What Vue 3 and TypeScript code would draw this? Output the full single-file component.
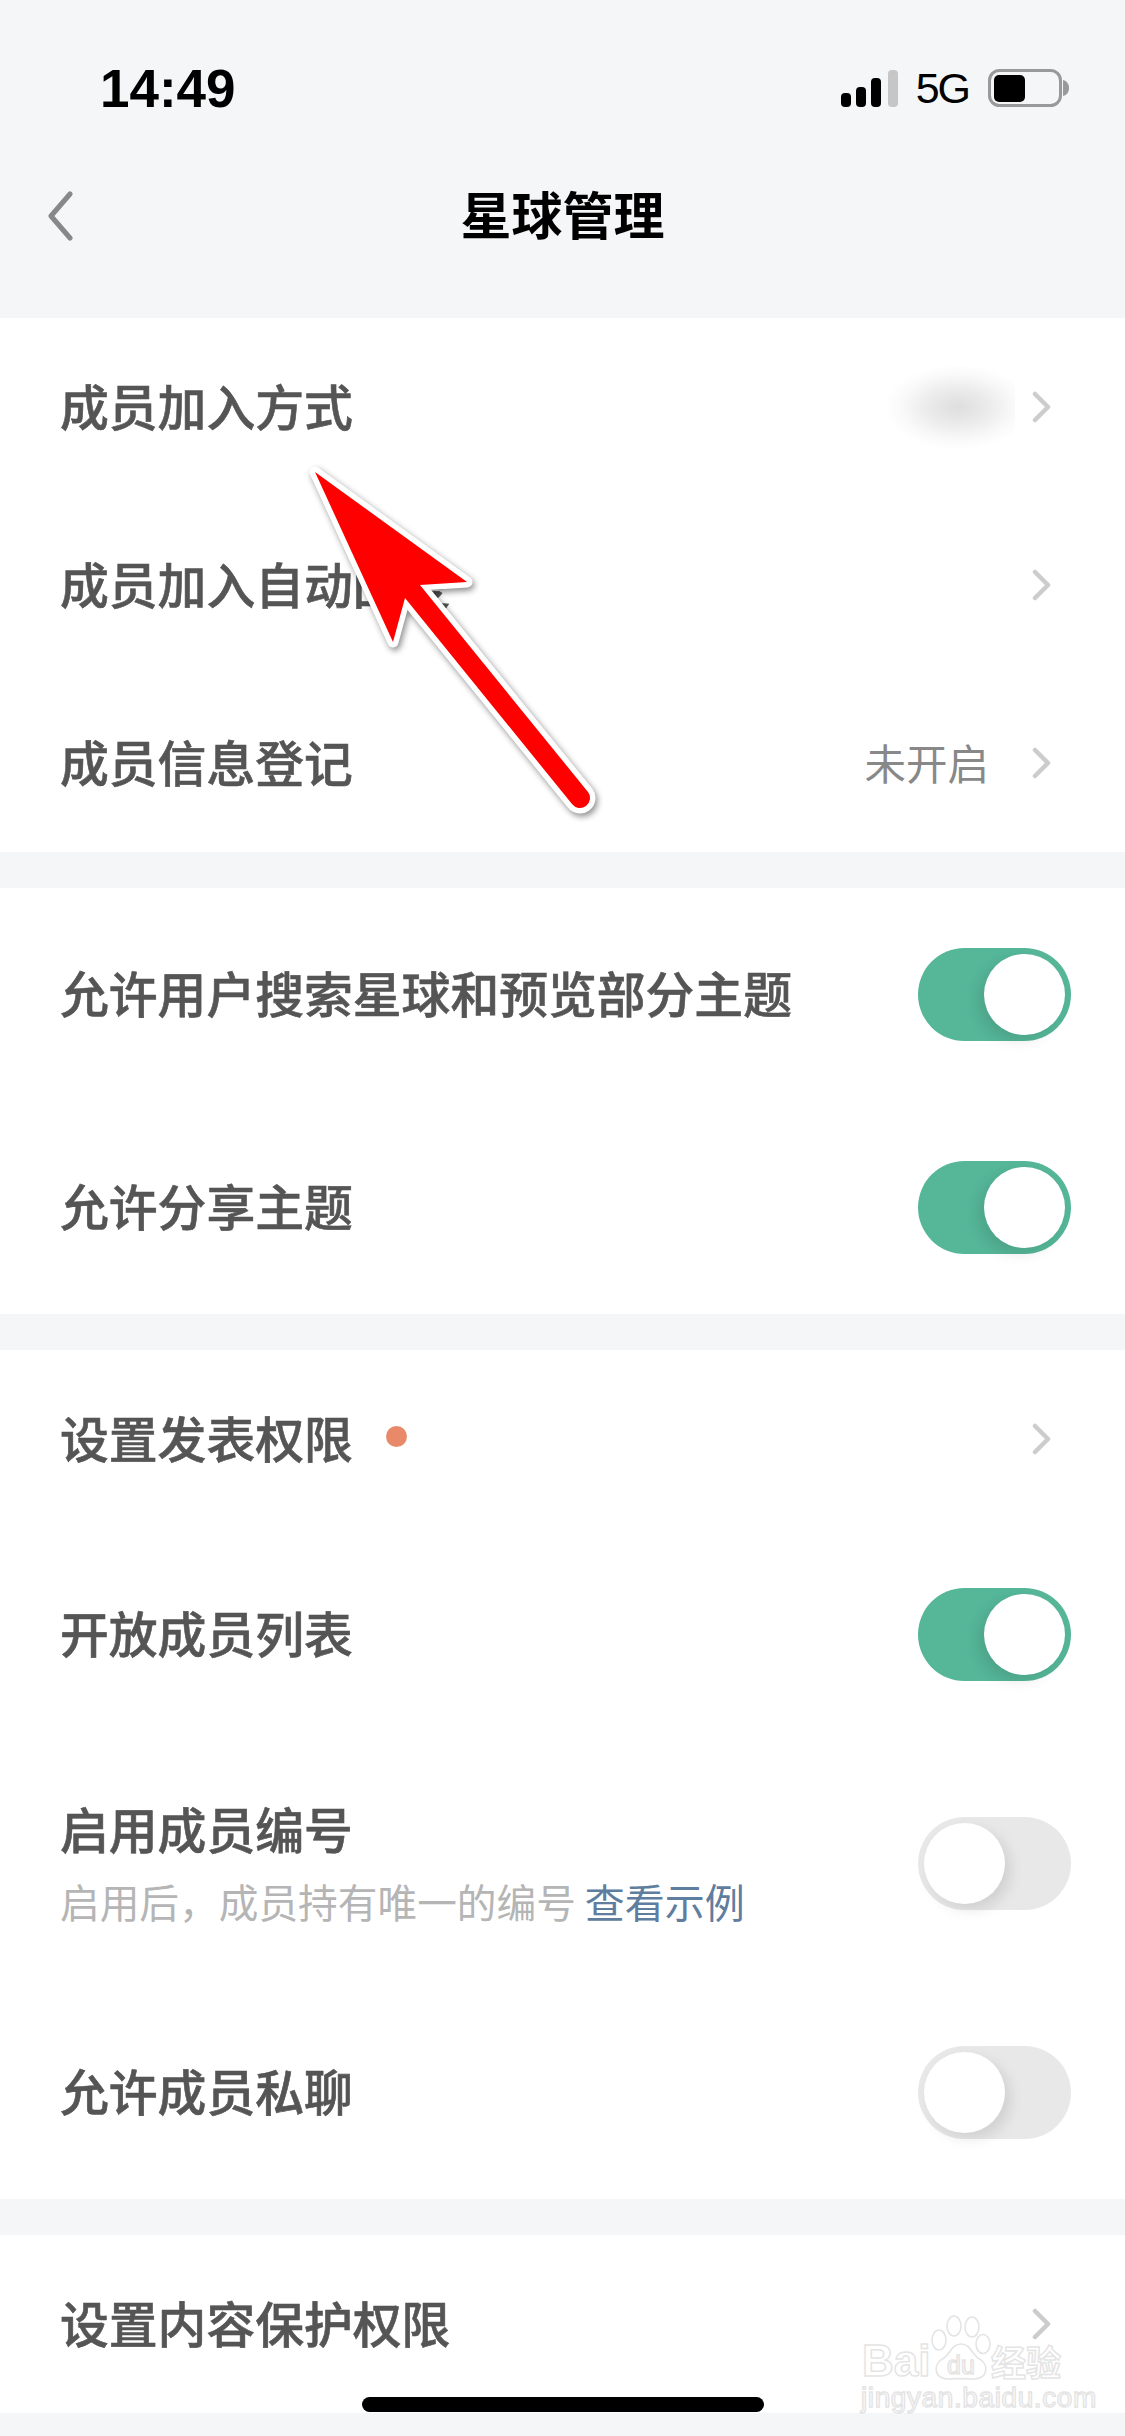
<template>
  <div class="page">
    <header class="header">
      <div class="status">
        <span class="time">14:49</span>
        <div class="status-right">
          <svg class="signal" width="59" height="37" viewBox="0 0 59 37">
            <rect x="2" y="23" width="10" height="14" rx="4" fill="#000" />
            <rect x="17" y="17" width="10" height="20" rx="4" fill="#000" />
            <rect x="32" y="8" width="10" height="29" rx="4" fill="#000" />
            <rect x="49" y="0" width="10" height="37" rx="4" fill="#c6c6c6" />
          </svg>
          <span class="net">5G</span>
          <svg class="battery" width="81" height="38" viewBox="0 0 81 38">
            <rect x="1.5" y="1.5" width="71" height="35" rx="10" fill="none" stroke="#999" stroke-width="3" />
            <rect x="6" y="6" width="31" height="27" rx="5" fill="#000" />
            <path d="M75 11 C79 12 81 15 81 19 C81 23 79 26 75 27 Z" fill="#999" />
          </svg>
        </div>
      </div>
      <div class="nav">
        <svg class="back" width="28" height="50" viewBox="0 0 28 50">
          <path d="M24 3 L5 25 L24 47" fill="none" stroke="#888" stroke-width="5" stroke-linecap="round" stroke-linejoin="round" />
        </svg>
        <h1 class="title">星球管理</h1>
      </div>
    </header>

    <section v-for="(group, i) in groups" :key="i" class="group">
      <div v-for="row in group" :key="row.label" class="row" :class="row.size">
        <div class="label-wrap">
          <div class="label">
            {{ row.label }}
            <span v-if="row.dot" class="dot"></span>
          </div>
          <div v-if="row.hint" class="hint">
            {{ row.hint }} <span class="link">{{ row.link }}</span>
          </div>
        </div>
        <span v-if="row.blurred" class="blurred"></span>
        <span v-if="row.value" class="value">{{ row.value }}</span>
        <svg v-if="row.kind === 'link'" class="chevron" width="20" height="32" viewBox="0 0 20 32">
          <path d="M3 3 L16 16 L3 29" fill="none" stroke="#ccc" stroke-width="4.5" stroke-linecap="round" stroke-linejoin="round" />
        </svg>
        <span v-if="row.kind === 'on' || row.kind === 'off'" class="toggle" :class="row.kind">
          <span class="knob"></span>
        </span>
      </div>
    </section>

    <svg class="arrow" width="1125" height="900" viewBox="0 0 1125 900">
      <path
        d="M315 472 L467 582 L420 585 L588 792 A10 10 0 0 1 572 804 L405 598 L393 642 Z"
        fill="#ff0000"
        stroke="#fff"
        stroke-width="11"
        stroke-linejoin="round"
        paint-order="stroke"
      />
    </svg>

    <div class="watermark">
      <svg class="paw" width="210" height="80" viewBox="0 0 210 80">
        <g fill="#fff" stroke="#e4e4e4" stroke-width="1.6">
          <ellipse cx="79" cy="28" rx="7" ry="10" />
          <ellipse cx="94" cy="14" rx="7" ry="10" />
          <ellipse cx="112" cy="15" rx="7" ry="10" />
          <ellipse cx="123" cy="32" rx="7" ry="9.5" />
          <path d="M101 32 C110 32 112 42 118 46 C130 52 128 67 114 67 C106 67 96 66 88 67 C74 67 72 52 84 46 C90 42 92 32 101 32 Z" />
        </g>
      </svg>
      <span class="wm-bai">Bai</span>
      <span class="wm-du">du</span>
      <span class="wm-jy">经验</span>
      <span class="wm-url">jingyan.baidu.com</span>
    </div>

    <div class="home-bar"></div>
  </div>
</template>

<script setup lang="ts">
interface Row {
  label: string
  size: string
  kind: 'link' | 'on' | 'off'
  value?: string
  blurred?: boolean
  dot?: boolean
  hint?: string
  link?: string
}

const groups: Row[][] = [
  [
    { label: '成员加入方式', size: 'short', kind: 'link', blurred: true },
    { label: '成员加入自动回复', size: 'short', kind: 'link' },
    { label: '成员信息登记', size: 'short', kind: 'link', value: '未开启' },
  ],
  [
    { label: '允许用户搜索星球和预览部分主题', size: 'mid', kind: 'on' },
    { label: '允许分享主题', size: 'mid', kind: 'on' },
  ],
  [
    { label: '设置发表权限', size: 'short', kind: 'link', dot: true },
    { label: '开放成员列表', size: 'mid', kind: 'on' },
    { label: '启用成员编号', size: 'tall', kind: 'off', hint: '启用后，成员持有唯一的编号', link: '查看示例' },
    { label: '允许成员私聊', size: 'mid', kind: 'off' },
  ],
  [{ label: '设置内容保护权限', size: 'short', kind: 'link' }],
]
</script>

<style>
html,
body {
  margin: 0;
  background: #f5f6f8;
}
</style>

<style scoped>
.page {
  position: relative;
  width: 1125px;
  height: 2436px;
  overflow: hidden;
  background: #f5f6f8;
  font-family: "Noto Sans CJK SC", "Liberation Sans", sans-serif;
}

.header {
  height: 318px;
}

.status {
  display: flex;
  justify-content: space-between;
  align-items: center;
  height: 176px;
  padding: 0 56px 0 100px;
  box-sizing: border-box;
}

.time {
  font-family: "Liberation Sans", sans-serif;
  font-size: 53px;
  font-weight: 700;
  color: #000;
}

.status-right {
  display: flex;
  align-items: center;
}

.net {
  margin: 0 19px 0 18px;
  font-family: "Liberation Sans", sans-serif;
  font-size: 43px;
  letter-spacing: -2px;
  color: #000;
}

.nav {
  position: relative;
  display: flex;
  justify-content: center;
  align-items: center;
  height: 80px;
}

.back {
  position: absolute;
  left: 46px;
  top: 15px;
}

.title {
  margin: 0 0 6px;
  font-size: 51px;
  font-weight: 700;
  color: #000;
}

.group {
  margin-bottom: 36px;
  background: #fff;
}

.row {
  display: flex;
  align-items: center;
  padding: 0 54px 0 60px;
  box-sizing: border-box;
}

.short {
  height: 178px;
}

.mid {
  height: 213px;
}

.tall {
  height: 245px;
}

.label-wrap {
  flex: 1;
  padding-bottom: 5px;
}

.tall .label-wrap {
  padding-bottom: 1px;
}

.label {
  display: flex;
  align-items: center;
  font-size: 48.8px;
  font-weight: 500;
  line-height: 60px;
  color: #555;
  -webkit-text-stroke: 0.6px #555;
}

.dot {
  width: 21px;
  height: 21px;
  margin-left: 33px;
  border-radius: 50%;
  background: #e8896a;
}

.hint {
  margin-top: 15px;
  font-size: 39.7px;
  line-height: 56px;
  color: #b5b5b5;
}

.link {
  font-size: 40px;
  color: #5f7d9e;
}

.value {
  margin-right: 43px;
  padding-bottom: 2px;
  font-size: 41.5px;
  color: #888;
}

.blurred {
  width: 155px;
  height: 100px;
  margin-right: 17px;
  background: radial-gradient(ellipse 86px 50px at 98px 50px, #dedede 0%, #ebebeb 35%, #f9f9f9 65%, #ffffff 85%);
}

.chevron {
  margin-right: 19px;
}

.toggle {
  position: relative;
  display: block;
  width: 153px;
  height: 93px;
  border-radius: 47px;
}

.toggle.on {
  background: #55b698;
}

.toggle.off {
  background: #e8e8e8;
}

.knob {
  position: absolute;
  top: 6px;
  width: 81px;
  height: 81px;
  border-radius: 50%;
  background: #fff;
}

.on .knob {
  right: 6px;
  box-shadow: -6px 6px 14px rgba(0, 0, 0, 0.1);
}

.off .knob {
  left: 6px;
  box-shadow: 6px 6px 14px rgba(0, 0, 0, 0.1);
}

.arrow {
  position: absolute;
  left: 0;
  top: 0;
  filter: drop-shadow(2px 3px 3px rgba(0, 0, 0, 0.45));
}

.watermark {
  position: absolute;
  left: 860px;
  top: 2312px;
  width: 210px;
  height: 102px;
}

.paw {
  position: absolute;
  left: 0;
  top: 0;
}

.watermark span {
  position: absolute;
  font-family: "Liberation Sans", sans-serif;
  color: #fff;
  -webkit-text-stroke: 1.4px #e4e4e4;
  line-height: 1;
}

.watermark .wm-bai {
  left: 2px;
  top: 27px;
  font-size: 44px;
  font-weight: 700;
}

.watermark .wm-du {
  left: 87px;
  top: 41px;
  font-size: 25px;
}

.watermark .wm-jy {
  left: 131px;
  top: 31px;
  font-family: "Noto Sans CJK SC", sans-serif;
  font-size: 35px;
  line-height: 36px;
  font-weight: 700;
}

.watermark .wm-url {
  left: 1px;
  top: 72px;
  font-size: 28px;
  letter-spacing: 0.6px;
}

.home-bar {
  position: absolute;
  left: 362px;
  top: 2397px;
  width: 402px;
  height: 15px;
  border-radius: 8px;
  background: #000;
}
</style>
